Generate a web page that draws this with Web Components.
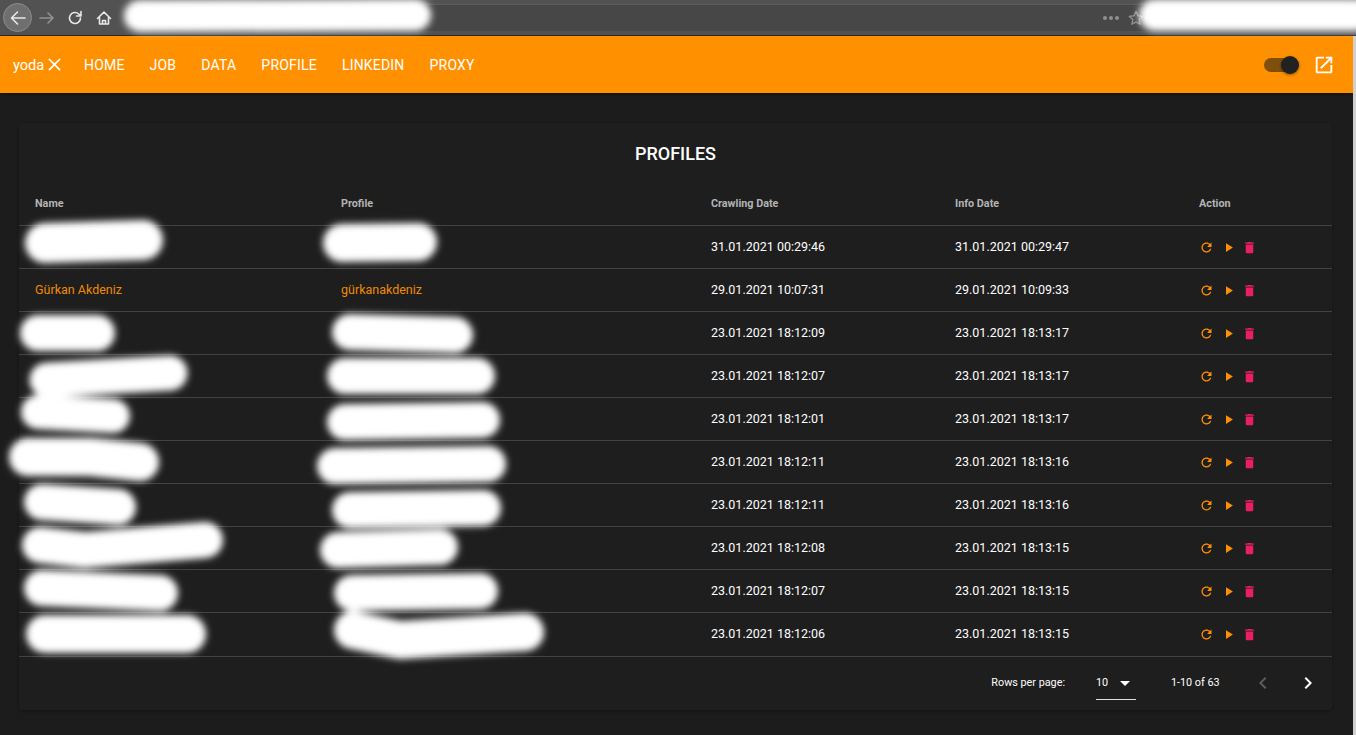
<!DOCTYPE html>
<html>
<head>
<meta charset="utf-8">
<title>Profiles</title>
<style>
    html, body { margin: 0; height: 100%; background: #1c1c1c; overflow: hidden; }
    body { font-family: Roboto, "Liberation Sans", sans-serif; color: #fff; }
</style>
</head>
<body>
<yoda-app></yoda-app>

<script>
const browserBarTemplate = document.createElement('template');
browserBarTemplate.innerHTML = `
    <style>
        :host {
            display: flex;
            align-items: center;
            height: 35px;
            background: #525252;
            border-bottom: 1px solid #2a2a2a;
        }
        .back {
            width: 27px;
            height: 27px;
            margin-left: 3px;
            border-radius: 50%;
            background: #6f6f6f;
            border: 1px solid #8c8c8c;
            display: flex;
            align-items: center;
            justify-content: center;
            flex: none;
        }
        .btn { display: flex; width: 16px; height: 16px; flex: none; }
        .forward { margin-left: 7px; opacity: .42; }
        .reload { margin-left: 12px; }
        .home { margin-left: 13px; }
        svg { display: block; fill: none; stroke: #e8e8e8; stroke-width: 1.6; stroke-linecap: round; stroke-linejoin: round; }
        .url {
            flex: 1;
            height: 26px;
            margin-left: 18px;
            background: #474747;
            border-top: 1px solid #5c5c5c;
            display: flex;
            align-items: center;
            justify-content: flex-end;
            gap: 9px;
        }
        .dots { display: flex; gap: 2px; }
        .dots i { width: 4px; height: 4px; border-radius: 50%; background: #8f8f8f; }
        .star { margin-right: 212px; width: 16px; height: 16px; }
        .star svg { stroke: #8f8f8f; stroke-width: 1.4; }
    </style>
    <div class="back">
        <svg width="18" height="18" viewBox="0 0 18 18"><path d="M16 9H3M8.500 3 2.500 9l6 6"/></svg>
    </div>
    <span class="btn forward"><svg width="16" height="16" viewBox="0 0 16 16"><path d="M1 8h13M9 3l5 5-5 5"/></svg></span>
    <span class="btn reload"><svg width="16" height="16" viewBox="0 0 16 16"><path d="M13.500 8a5.500 5.500 0 1 1-1.700-4L14 6M14 1.500V6H9.500"/></svg></span>
    <span class="btn home"><svg width="16" height="16" viewBox="0 0 16 16"><path d="M1.500 8.500 8 2l6.500 6.500M3.500 7.500V14h9V7.500M6.500 14v-3.500h3V14"/></svg></span>
    <div class="url">
        <span class="dots"><i></i><i></i><i></i></span>
        <span class="star"><svg width="16" height="16" viewBox="0 0 16 16"><path d="m8 1.500 2 4.300 4.700.6-3.500 3.200.9 4.600L8 12l-4.100 2.200.9-4.600L1.300 6.400 6 5.800z"/></svg></span>
    </div>
`;

class BrowserBar extends HTMLElement {
    constructor() {
        super();
        this.attachShadow({ mode: 'open' });
        this.shadowRoot.appendChild(browserBarTemplate.content.cloneNode(true));
    }
}

const appBarTemplate = document.createElement('template');
appBarTemplate.innerHTML = `
    <style>
        :host {
            display: flex;
            align-items: center;
            height: 57px;
            background: #ff9100;
            color: #fff;
            font-family: Roboto, "Liberation Sans", sans-serif;
            flex: none;
            box-shadow: 0 2px 4px rgba(0,0,0,.3);
        }
        .brand {
            display: flex;
            align-items: center;
            margin-left: 13px;
            font-size: 14.600px;
            width: 63px;
        }
        .brand svg { fill: #fff; flex: none; }
        nav { display: flex; font-size: 14px; }
        nav span { padding: 0 8px; margin-right: 9px; letter-spacing: .2px; line-height: 20px; }
        .spacer { flex: 1; }
        .switch {
            position: relative;
            width: 26px;
            height: 14px;
            border-radius: 7px;
            background: #7f4f0c;
        }
        .switch::after {
            content: "";
            position: absolute;
            left: 17px;
            top: -2px;
            width: 18px;
            height: 18px;
            border-radius: 50%;
            background: #212121;
            box-shadow: 0 1px 3px rgba(0,0,0,.45);
        }
        .open { margin: 0 18px 0 23px; fill: #fff; display: block; }
    </style>
    <div class="brand">
        <span>yoda</span>
        <svg width="21" height="21" viewBox="0 0 24 24"><path d="M19 6.410 17.590 5 12 10.590 6.410 5 5 6.410 10.590 12 5 17.590 6.410 19 12 13.410 17.590 19 19 17.590 13.410 12z"/></svg>
    </div>
    <nav>
        <span>HOME</span><span>JOB</span><span>DATA</span><span>PROFILE</span><span>LINKEDIN</span><span>PROXY</span>
    </nav>
    <div class="spacer"></div>
    <div class="switch"></div>
    <svg class="open" width="22" height="22" viewBox="0 0 24 24"><path d="M19 19H5V5h7V3H5c-1.110 0-2 .9-2 2v14c0 1.100.89 2 2 2h14c1.100 0 2-.9 2-2v-7h-2v7zM14 3v2h3.590l-9.830 9.830 1.410 1.410L19 6.410V10h2V3h-7z"/></svg>
`;

class AppBar extends HTMLElement {
    constructor() {
        super();
        this.attachShadow({ mode: 'open' });
        this.shadowRoot.appendChild(appBarTemplate.content.cloneNode(true));
    }
}

// shared column widths, the header and the rows have to line up
const COLUMNS = '306px 370px 244px 244px 1fr';

const profileRowTemplate = document.createElement('template');
profileRowTemplate.innerHTML = `
    <style>
        :host {
            display: grid;
            grid-template-columns: ${COLUMNS};
            align-items: center;
            height: 42px;
            border-bottom: 1px solid #424242;
            font-size: 12.500px;
            color: #fff;
        }
        :host(:last-child) { height: 43px; }
        .cell { padding: 0 0 2px 16px; white-space: nowrap; }
        .link { color: #f08a05; }
        .actions { display: flex; align-items: center; padding-left: 16px; }
        .actions svg { display: block; width: 15px; height: 15px; margin-right: 7px; }
        .actions svg.play { margin-right: 5.500px; }
        .orange { fill: #ff9100; }
        .pink { fill: #e91e63; }
    </style>
    <div class="cell link" id="name"></div>
    <div class="cell link" id="profile"></div>
    <div class="cell" id="crawled"></div>
    <div class="cell" id="info"></div>
    <div class="actions">
        <svg class="orange" viewBox="0 0 24 24"><path d="M17.650 6.350C16.200 4.900 14.210 4 12 4c-4.420 0-7.990 3.580-7.990 8s3.570 8 7.990 8c3.730 0 6.840-2.550 7.730-6h-2.080c-.82 2.330-3.040 4-5.650 4-3.310 0-6-2.690-6-6s2.690-6 6-6c1.660 0 3.140.69 4.220 1.780L13 11h7V4l-2.350 2.350z"/></svg>
        <svg class="orange play" viewBox="0 0 24 24"><path d="M8 5v14l11-7z"/></svg>
        <svg class="pink" viewBox="0 0 24 24"><path d="M6 19c0 1.100.9 2 2 2h8c1.100 0 2-.9 2-2V7H6v12zM19 4h-3.500l-1-1h-5l-1 1H5v2h14V4z"/></svg>
    </div>
`;

class ProfileRow extends HTMLElement {
    constructor() {
        super();
        this.attachShadow({ mode: 'open' });
        this.shadowRoot.appendChild(profileRowTemplate.content.cloneNode(true));
    }

    connectedCallback() {
        ['name', 'profile', 'crawled', 'info'].forEach(key => {
            this.shadowRoot.querySelector('#' + key).innerText = this.getAttribute(key) || '';
        });
    }
}

const tablePagerTemplate = document.createElement('template');
tablePagerTemplate.innerHTML = `
    <style>
        :host {
            display: flex;
            align-items: center;
            justify-content: flex-end;
            height: 51px;
            padding-bottom: 2px;
            font-size: 10.800px;
            color: #fff;
        }
        .select {
            position: relative;
            width: 40px;
            height: 28px;
            line-height: 22px;
            margin: 0 35px 0 31px;
            border-bottom: 1px solid #e0e0e0;
            box-sizing: border-box;
            top: 3px;
        }
        .select svg { position: absolute; right: -1px; top: -1px; fill: #fff; }
        .range { width: 48px; white-space: nowrap; }
        .nav { display: block; }
        .prev { margin-left: 32px; fill: #5c5c5c; }
        .next { margin-left: 21px; margin-right: 12px; fill: #fff; }
    </style>
    <span>Rows per page:</span>
    <div class="select">10<svg width="24" height="24" viewBox="0 0 24 24"><path d="M7 10l5 5 5-5z"/></svg></div>
    <span class="range">1-10 of 63</span>
    <svg class="nav prev" width="24" height="24" viewBox="0 0 24 24"><path d="M15.410 7.410 14 6l-6 6 6 6 1.410-1.410L10.830 12z"/></svg>
    <svg class="nav next" width="24" height="24" viewBox="0 0 24 24"><path d="M10 6 8.590 7.410 13.170 12l-4.580 4.590L10 18l6-6z"/></svg>
`;

class TablePager extends HTMLElement {
    constructor() {
        super();
        this.attachShadow({ mode: 'open' });
        this.shadowRoot.appendChild(tablePagerTemplate.content.cloneNode(true));
    }
}

const profilesTableTemplate = document.createElement('template');
profilesTableTemplate.innerHTML = `
    <style>
        :host {
            display: block;
            width: 1313px;
            margin: 30px 0 0 19px;
            background: #1e1e1e;
            border-radius: 4px;
            box-shadow: 0 1px 3px rgba(0,0,0,.35);
        }
        h2 {
            margin: 0;
            padding-top: 19px;
            height: 41px;
            text-align: center;
            font-size: 18px;
            line-height: 24px;
            font-weight: 500;
            color: #fff;
        }
        .head {
            display: grid;
            grid-template-columns: ${COLUMNS};
            align-items: center;
            height: 40px;
            padding-bottom: 2px;
            border-bottom: 1px solid #424242;
            font-size: 10.800px;
            font-weight: 700;
            color: #b4b4b4;
        }
        .head span { padding-left: 16px; }
    </style>
    <h2>PROFILES</h2>
    <div class="head">
        <span>Name</span><span>Profile</span><span>Crawling Date</span><span>Info Date</span><span>Action</span>
    </div>
    <slot></slot>
    <table-pager></table-pager>
`;

class ProfilesTable extends HTMLElement {
    constructor() {
        super();
        this.attachShadow({ mode: 'open' });
        this.shadowRoot.appendChild(profilesTableTemplate.content.cloneNode(true));
    }
}

// the white smears lie over the screenshot, page coordinates on purpose
const SMEARS = [
    ['M140 16 L415 15', 32],
    ['M1155 15 L1356 15', 32],
    ['M45 243 L143 240', 40], ['M342 243 L418 242', 38],
    ['M38 333 L97 333', 36], ['M350 332 L455 335', 36],
    ['M47 380 L170 373', 35], ['M345 376 L477 376', 36],
    ['M38 412 L113 416', 34], ['M345 422 L482 420', 36],
    ['M28 457 L90 457 L140 462', 38], ['M335 466 L488 464', 36],
    ['M42 502 L118 507', 36], ['M350 510 L483 508', 36],
    ['M40 545 L85 550 L205 540', 36], ['M338 550 L440 547', 36],
    ['M42 588 L160 593', 36], ['M352 593 L480 591', 36],
    ['M45 634 L187 634', 38], ['M353 630 L400 640 L525 632', 38]
];

const smearLayerTemplate = document.createElement('template');
smearLayerTemplate.innerHTML = `
    <style>
        :host { position: absolute; left: 0; top: 0; width: 1356px; height: 735px; pointer-events: none; }
        svg { display: block; }
        path { fill: none; stroke: #fff; stroke-linecap: round; stroke-linejoin: round; }
    </style>
    <svg width="1356" height="735" viewBox="0 0 1356 735">
        <defs><filter id="soft" x="-20%" y="-100%" width="140%" height="300%"><feGaussianBlur stdDeviation="3.500"/></filter></defs>
        <g filter="url(#soft)"></g>
    </svg>
`;

class SmearLayer extends HTMLElement {
    constructor() {
        super();
        this.attachShadow({ mode: 'open' });
        this.shadowRoot.appendChild(smearLayerTemplate.content.cloneNode(true));
        const group = this.shadowRoot.querySelector('g');
        SMEARS.forEach(([d, width]) => {
            const path = document.createElementNS('http://www.w3.org/2000/svg', 'path');
            path.setAttribute('d', d);
            path.setAttribute('stroke-width', width);
            group.appendChild(path);
        });
    }
}

const yodaAppTemplate = document.createElement('template');
yodaAppTemplate.innerHTML = `
    <style>
        :host { display: block; position: relative; width: 1356px; height: 735px; overflow: hidden; }
        .body { display: flex; height: 699px; }
        main { flex: 1; display: flex; flex-direction: column; min-width: 0; }
        .edge { width: 3px; flex: none; background: #d0d0d0; }
    </style>
    <browser-bar></browser-bar>
    <div class="body">
        <main>
            <app-bar></app-bar>
            <profiles-table id="table"></profiles-table>
        </main>
        <div class="edge"></div>
    </div>
    <smear-layer></smear-layer>
`;

const ROWS = [
    ['', '', '31.01.2021 00:29:46', '31.01.2021 00:29:47'],
    ['Gürkan Akdeniz', 'gürkanakdeniz', '29.01.2021 10:07:31', '29.01.2021 10:09:33'],
    ['', '', '23.01.2021 18:12:09', '23.01.2021 18:13:17'],
    ['', '', '23.01.2021 18:12:07', '23.01.2021 18:13:17'],
    ['', '', '23.01.2021 18:12:01', '23.01.2021 18:13:17'],
    ['', '', '23.01.2021 18:12:11', '23.01.2021 18:13:16'],
    ['', '', '23.01.2021 18:12:11', '23.01.2021 18:13:16'],
    ['', '', '23.01.2021 18:12:08', '23.01.2021 18:13:15'],
    ['', '', '23.01.2021 18:12:07', '23.01.2021 18:13:15'],
    ['', '', '23.01.2021 18:12:06', '23.01.2021 18:13:15']
];

class YodaApp extends HTMLElement {
    constructor() {
        super();
        this.attachShadow({ mode: 'open' });
        this.shadowRoot.appendChild(yodaAppTemplate.content.cloneNode(true));
    }

    connectedCallback() {
        const table = this.shadowRoot.querySelector('#table');
        ROWS.forEach(([name, profile, crawled, info]) => {
            const row = document.createElement('profile-row');
            row.setAttribute('name', name);
            row.setAttribute('profile', profile);
            row.setAttribute('crawled', crawled);
            row.setAttribute('info', info);
            table.appendChild(row);
        });
    }
}

window.customElements.define('browser-bar', BrowserBar);
window.customElements.define('app-bar', AppBar);
window.customElements.define('table-pager', TablePager);
window.customElements.define('smear-layer', SmearLayer);
window.customElements.define('profiles-table', ProfilesTable);
window.customElements.define('profile-row', ProfileRow);
window.customElements.define('yoda-app', YodaApp);
</script>
</body>
</html>
